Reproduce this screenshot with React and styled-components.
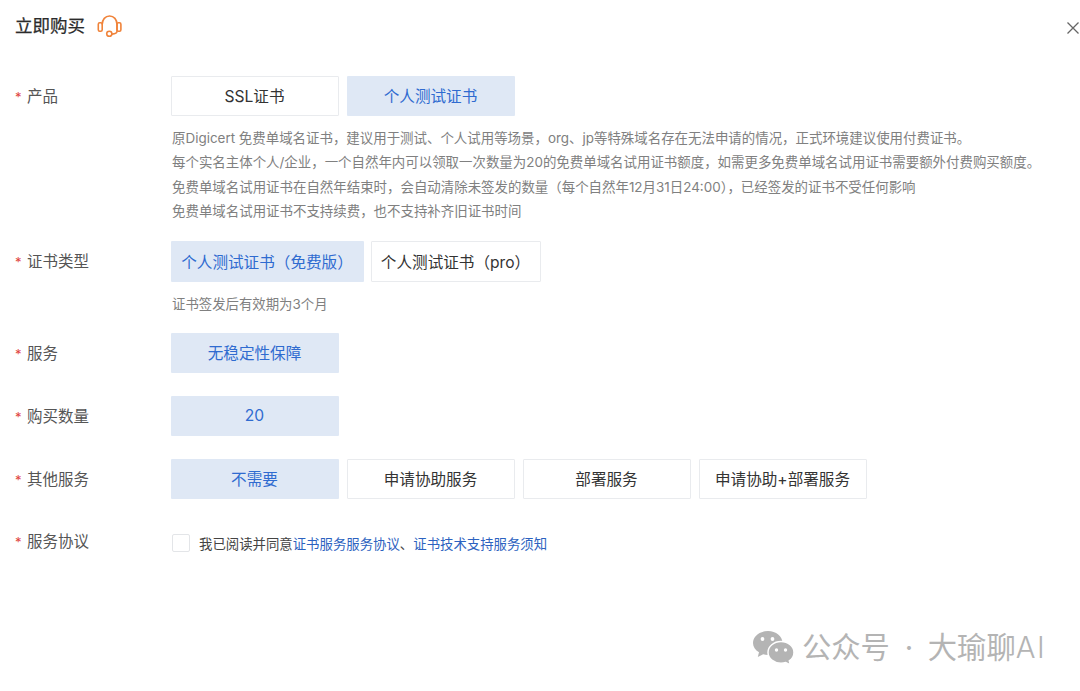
import React, { useState } from "react";
import styled, { createGlobalStyle } from "styled-components";

const GlobalStyle = createGlobalStyle`
  html, body {
    margin: 0;
    padding: 0;
    background: #fff;
    font-family: Inter, "Noto Sans CJK SC", sans-serif;
  }
`;

const Page = styled.div`
  position: relative;
  width: 1080px;
  height: 691px;
  overflow: hidden;
  background: #fff;
`;

const Header = styled.div`
  display: flex;
  align-items: center;
  gap: 12px;
  height: 28px;
  padding: 12px 0 0 15px;
  margin-bottom: 36px;
`;

const Title = styled.h1`
  margin: 0;
  font-size: 17.5px;
  line-height: 28px;
  font-weight: 400;
  color: #2b2b2b;
  -webkit-text-stroke: 0.25px #2b2b2b;
`;

const CloseButton = styled.button`
  position: absolute;
  top: 21px;
  right: 0;
  width: 14px;
  height: 14px;
  padding: 0;
  border: none;
  background: none;
  cursor: pointer;
  svg { display: block; }
`;

const Row = styled.div`
  display: grid;
  grid-template-columns: 171px 1fr;
  margin-bottom: ${(props) => props.$gap}px;
`;

const Label = styled.div`
  display: flex;
  align-items: center;
  gap: 6px;
  height: 41px;
  padding-left: 15px;
  font-size: 15.5px;
  line-height: 20px;
  color: #555;
`;

const Star = styled.span`
  color: #e0443e;
  font-size: 13px;
  width: 6px;
`;

const Options = styled.div`
  display: flex;
  align-items: flex-start;
  gap: ${(props) => props.$gap || 8}px;
`;

const Option = styled.button`
  box-sizing: border-box;
  width: ${(props) => props.$width || 168}px;
  height: ${(props) => props.$height || 40}px;
  padding: 0 1px 2px 0;
  border: ${(props) => (props.$active ? "none" : "1.5px solid #e9ebee")};
  border-radius: 1px;
  background: ${(props) => (props.$active ? "#dfe8f5" : "#fff")};
  color: ${(props) => (props.$active ? "#2f6bd0" : "#333")};
  font-family: inherit;
  font-size: 15.6px;
  cursor: pointer;
`;

const Notes = styled.div`
  margin: 9.5px 0 0 1px;
  font-size: 13.45px;
  line-height: 24.5px;
  color: #808080;
  white-space: nowrap;
`;

const Hint = styled.div`
  margin: 10px 0 0 1px;
  font-size: 13.4px;
  line-height: 24px;
  color: #808080;
`;

const Agreement = styled.label`
  display: flex;
  align-items: center;
  height: 18px;
  margin-left: 1px;
  font-size: 13.4px;
  color: #444;
  cursor: pointer;
`;

const AgreementLabel = styled(Label)`
  height: 16px;
`;

const Checkbox = styled.input`
  appearance: none;
  box-sizing: border-box;
  width: 18px;
  height: 18px;
  margin: 0 9px 0 0;
  border: 1px solid #e3e5e8;
  border-radius: 2px;
  background: #fff;
  cursor: pointer;
  &:checked { background: #2f6bd0; }
`;

const AgreementLink = styled.a`
  color: #2c62c0;
  text-decoration: none;
`;

const Watermark = styled.div`
  position: absolute;
  left: 753px;
  top: 630px;
  display: flex;
  align-items: center;
  gap: 8px;
  font-size: 29.3px;
  line-height: 36px;
  color: #b4b4b4;
  white-space: nowrap;
  svg { display: block; }
`;

const WatermarkDot = styled.span`
  margin: 0 6.5px;
`;

const WatermarkLatin = styled.span`
  letter-spacing: 1.5px;
  font-weight: 300;
`;

const HeadsetIcon = () => (
  <svg width="25" height="22" viewBox="0 0 25 22" fill="none" stroke="#f0833a" strokeWidth="1.6">
    <rect x="1.3" y="7.8" width="3.9" height="8.4" rx="1.4" />
    <rect x="20" y="7.8" width="3.9" height="8.4" rx="1.4" />
    <path d="M5.2 9.5C5.2 4.5 8.3 1 12.6 1S20 4.5 20 9.5v6.7c0 1.7-2 2.7-5 2.9" />
    <circle cx="12.3" cy="18.8" r="2.6" />
  </svg>
);

const CloseIcon = () => (
  <svg width="14" height="14" viewBox="0 0 14 14" stroke="#666" strokeWidth="1.3">
    <path d="M1.5 1.5l11 11M12.5 1.5l-11 11" />
  </svg>
);

const WechatIcon = () => (
  <svg width="41" height="34" viewBox="0 0 41 34" fill="#b4b4b4">
    <path d="M15 0c8 0 14.5 5.3 14.5 12S23 24 15 24c-1.7 0-3.3-.2-4.800-.7L4.800 26l1.200-4.700C2.300 19 0 15.700 0 12 0 5.300 6.700 0 15 0z" />
    <path d="M28 10.500c7.200 0 13 4.900 13 10.900 0 3.400-1.800 6.400-4.700 8.400l1.100 4.200-4.700-2.500c-1.500.5-3 .7-4.700.7-7.200 0-13-4.800-13-10.800s5.800-10.900 13-10.900z" stroke="#fff" strokeWidth="1.5" />
    <circle cx="9.5" cy="8" r="1.900" fill="#fff" />
    <circle cx="19.5" cy="8" r="1.900" fill="#fff" />
    <circle cx="23.5" cy="19" r="1.700" fill="#fff" />
    <circle cx="32.5" cy="19" r="1.700" fill="#fff" />
  </svg>
);

const notes = [
  "原Digicert 免费单域名证书，建议用于测试、个人试用等场景，org、jp等特殊域名存在无法申请的情况，正式环境建议使用付费证书。",
  "每个实名主体个人/企业，一个自然年内可以领取一次数量为20的免费单域名试用证书额度，如需更多免费单域名试用证书需要额外付费购买额度。",
  "免费单域名试用证书在自然年结束时，会自动清除未签发的数量（每个自然年12月31日24:00），已经签发的证书不受任何影响",
  "免费单域名试用证书不支持续费，也不支持补齐旧证书时间",
];

const extras = ["不需要", "申请协助服务", "部署服务", "申请协助+部署服务"];

const App = () => {
  const [product, setProduct] = useState("个人测试证书");
  const [certType, setCertType] = useState("free");
  const [extra, setExtra] = useState("不需要");

  return (
    <Page>
      <GlobalStyle />
      <Header>
        <Title>立即购买</Title>
        <HeadsetIcon />
      </Header>
      <CloseButton aria-label="关闭">
        <CloseIcon />
      </CloseButton>

      <Row $gap={17.5}>
        <Label><Star>*</Star>产品</Label>
        <div>
          <Options>
            {["SSL证书", "个人测试证书"].map((item) => (
              <Option key={item} $active={product === item} onClick={() => setProduct(item)}>
                {item}
              </Option>
            ))}
          </Options>
          <Notes>
            {notes.map((line) => (
              <div key={line}>{line}</div>
            ))}
          </Notes>
        </div>
      </Row>

      <Row $gap={17}>
        <Label><Star>*</Star>证书类型</Label>
        <div>
          <Options $gap={7}>
            <Option $width={193} $height={41} $active={certType === "free"} onClick={() => setCertType("free")}>
              个人测试证书（免费版）
            </Option>
            <Option $width={170} $height={41} $active={certType === "pro"} onClick={() => setCertType("pro")}>
              个人测试证书（pro）
            </Option>
          </Options>
          <Hint>证书签发后有效期为3个月</Hint>
        </div>
      </Row>

      <Row $gap={22}>
        <Label><Star>*</Star>服务</Label>
        <Options><Option $active>无稳定性保障</Option></Options>
      </Row>

      <Row $gap={22}>
        <Label><Star>*</Star>购买数量</Label>
        <Options><Option $active>20</Option></Options>
      </Row>

      <Row $gap={34}>
        <Label><Star>*</Star>其他服务</Label>
        <Options>
          {extras.map((item) => (
            <Option key={item} $active={extra === item} onClick={() => setExtra(item)}>
              {item}
            </Option>
          ))}
        </Options>
      </Row>

      <Row $gap={0}>
        <AgreementLabel><Star>*</Star>服务协议</AgreementLabel>
        <Agreement>
          <Checkbox type="checkbox" />
          我已阅读并同意
          <AgreementLink href="#">证书服务服务协议</AgreementLink>
          、
          <AgreementLink href="#">证书技术支持服务须知</AgreementLink>
        </Agreement>
      </Row>

      <Watermark>
        <WechatIcon />
        <span>
          公众号<WatermarkDot> · </WatermarkDot>大瑜聊<WatermarkLatin>AI</WatermarkLatin>
        </span>
      </Watermark>
    </Page>
  );
};

export default App;
